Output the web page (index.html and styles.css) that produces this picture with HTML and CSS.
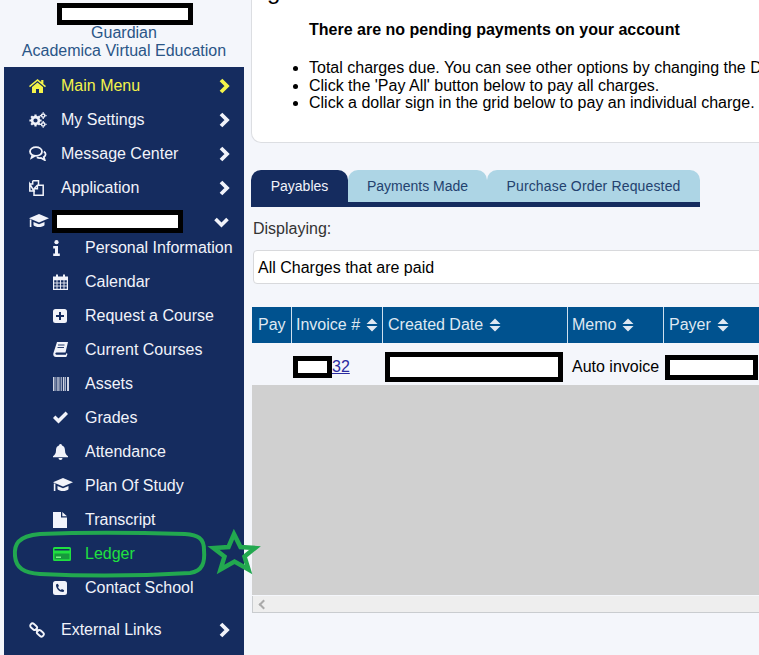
FILE: index.html
```html
<!DOCTYPE html>
<html lang="en">
<head>
  <meta charset="UTF-8" />
  <title>Ledger</title>
  <link rel="stylesheet" href="styles.css">
</head>
<body>
  <svg width="0" height="0" class="icon-defs">
    <symbol id="i-chev" viewBox="0 0 12 16"><path d="M3 2l6 6-6 6" fill="none" stroke="currentColor" stroke-width="3.800"/></symbol>
    <symbol id="i-chev-down" viewBox="0 0 16 12"><path d="M2 3l6 6 6-6" fill="none" stroke="currentColor" stroke-width="3.600"/></symbol>
    <symbol id="i-home" viewBox="0 0 17 14"><path d="M8.500 0L0 7l1 1.200L8.500 2.100 16 8.200 17 7l-2.600-2.100V1h-2.200v2.100z"/><path d="M8.500 3.400l5.500 4.500V14H10v-4H7v4H3V7.900z"/></symbol>
    <symbol id="i-cogs" viewBox="0 0 18 16"><circle cx="6.500" cy="8.500" r="3.400" fill="none" stroke="currentColor" stroke-width="2.600"/><path d="M6.500 2.400v2M6.500 12.600v2M.4 8.500h2M10.600 8.500h2M2.200 4.200l1.400 1.400M9.400 11.400l1.400 1.400M10.800 4.200L9.400 5.600M3.600 11.400l-1.400 1.400" stroke="currentColor" stroke-width="2.200"/><circle cx="14.200" cy="3.600" r="1.700" fill="none" stroke="currentColor" stroke-width="1.500"/><circle cx="14.200" cy="12.400" r="1.700" fill="none" stroke="currentColor" stroke-width="1.500"/><path d="M14.200.2v1.200M14.200 5.800V7M10.800 3.600H12M16.400 3.600h1.200M14.200 9v1.200M14.200 14.600v1.200M10.800 12.400H12M16.400 12.400h1.200" stroke="currentColor" stroke-width="1.300"/></symbol>
    <symbol id="i-comments" viewBox="0 0 18 15"><ellipse cx="7" cy="5.500" rx="6" ry="4.400" fill="none" stroke="currentColor" stroke-width="1.800"/><path d="M3.300 9l-1 3 3.500-2" fill="none" stroke="currentColor" stroke-width="1.500"/><path d="M14.800 5.500c2.400 1.500 2.400 4.200 0 5.500l.9 3-3.700-2c-1.500.2-3 0-4.100-.8" fill="none" stroke="currentColor" stroke-width="1.800"/></symbol>
    <symbol id="i-clone" viewBox="0 0 15 16"><path d="M3.700.8H9.500V5M5 11H.8V4z" fill="none" stroke="currentColor" stroke-width="1.500"/><path d="M3.700.8V4H.8" fill="none" stroke="currentColor" stroke-width="1.500"/><path d="M8.400 5.300h5.800v10H5V8.800z" fill="none" stroke="currentColor" stroke-width="1.500"/><path d="M8.400 5.300v3.500H5" fill="none" stroke="currentColor" stroke-width="1.500"/></symbol>
    <symbol id="i-grad" viewBox="0 0 20 15"><path d="M10 0L0 4.300l10 4.300 10-4.300z"/><path d="M4.500 8v3.200c2 2.400 9 2.400 11 0V8L10 10.300z"/><path d="M1.600 5.500v7.500" stroke="currentColor" stroke-width="1.600"/></symbol>
    <symbol id="i-info" viewBox="0 0 7 16"><circle cx="3.500" cy="2.200" r="2.100"/><path d="M.2 6h4.800v7.500h1.800V16H.2v-2.500H2V8.500H.2z"/></symbol>
    <symbol id="i-cal" viewBox="0 0 15 16"><path d="M.6 3h13.800v12.400H.6z" fill="none" stroke="currentColor" stroke-width="1.200"/><path d="M.6 3h13.800v3.200H.6zM3 .5h2v3.500H3zM10 .5h2v3.500h-2z"/><path d="M.6 9h13.800M.6 12h13.800M4 6v9M7.500 6v9M11 6v9" stroke="currentColor" stroke-width=".9"/></symbol>
    <symbol id="i-plus" viewBox="0 0 14 14"><path fill-rule="evenodd" d="M2.500 0h9A2.500 2.500 0 0 1 14 2.500v9a2.500 2.500 0 0 1-2.500 2.500h-9A2.500 2.500 0 0 1 0 11.500v-9A2.500 2.500 0 0 1 2.500 0zM6 3v3H3v2h3v3h2V8h3V6H8V3z"/></symbol>
    <symbol id="i-book" viewBox="0 0 15 15"><path d="M4 0H15L12.500 10.500H3.500c-1 0-1.400.8-1 1.600.2.400.6.600 1 .6h9.300l.7-1.700L14.500 12 13.300 15H3C1 15 0 13.500.3 11.500z"/><path d="M5 3h6.500M4.500 5.500H11" stroke="#152c5f" stroke-width=".9"/></symbol>
    <symbol id="i-barcode" viewBox="0 0 16 14"><path d="M0 0h1.500v14H0zM2.500 0h.8v14h-.8zM4.300 0h1.400v14H4.300zM6.500 0h.8v14h-.8zM8.300 0h.8v14h-.8zM10 0h1.400v14H10zM12.200 0h.8v14h-.8zM14 0h2v14h-2z" opacity=".85"/></symbol>
    <symbol id="i-check" viewBox="0 0 15 13"><path d="M0 7l2.400-2.400L5.500 7.500 12.600 .5 15 3 5.500 12.500z"/></symbol>
    <symbol id="i-bell" viewBox="0 0 15 16"><circle cx="7.500" cy="1.300" r="1.300"/><path d="M7.500 1.300c3.200 0 4.500 2.400 4.500 5.200 0 3 1.300 4.600 3 5.800V13.300H0v-1c1.700-1.200 3-2.800 3-5.800 0-2.800 1.300-5.200 4.500-5.200z"/><path d="M5.500 14h4a2 2 0 0 1-4 0z"/></symbol>
    <symbol id="i-file" viewBox="0 0 14 16"><path d="M0 0h8v5.500h6V16H0zM9.300 0L14 4.300H9.300z"/></symbol>
    <symbol id="i-card" viewBox="0 0 18 14"><path fill-rule="evenodd" d="M1.500 0h15A1.500 1.500 0 0 1 18 1.500v11a1.500 1.500 0 0 1-1.500 1.500h-15A1.500 1.500 0 0 1 0 12.500v-11A1.500 1.500 0 0 1 1.500 0zM1.500 2v1.500h15V2z"/><path d="M1.500 6.500h15v5.800h-15z" fill="#169a3c"/><path d="M3 9.500h5V11H3z" fill="#7ff08a"/></symbol>
    <symbol id="i-phone" viewBox="0 0 14 14"><path fill-rule="evenodd" d="M2.500 0h9A2.500 2.500 0 0 1 14 2.500v9a2.500 2.500 0 0 1-2.500 2.500h-9A2.500 2.500 0 0 1 0 11.500v-9A2.500 2.500 0 0 1 2.500 0zM4.800 2.800L3 3.500c-.3 4 3.500 7.800 7.500 7.500l.7-1.800-2.300-1.200-1 1C6.500 8.500 5.500 7.500 5 6.100l1-1z"/></symbol>
    <symbol id="i-link" viewBox="0 0 16 16"><rect x="0.900" y="2.400" width="7.500" height="4.600" rx="2.300" transform="rotate(40 4.600 4.700)" fill="none" stroke="currentColor" stroke-width="1.900"/><rect x="7.600" y="9" width="7.500" height="4.600" rx="2.300" transform="rotate(40 11.400 11.300)" fill="none" stroke="currentColor" stroke-width="1.900"/><path d="M6.500 6.500l3 3" stroke="currentColor" stroke-width="1.900"/></symbol>
    <symbol id="i-sort" viewBox="0 0 12 14"><path d="M6 .5l5.500 5.500H.5zM6 13.500L.5 8h11z"/></symbol>
  </svg>

  <div class="layout">
    <aside class="sidebar">
      <div class="school">
        <span class="redact school-redact"></span>
        <div class="school-role">Guardian</div>
        <div class="school-name">Academica Virtual Education</div>
      </div>
      <nav class="menu">
        <a class="menu-item active"><svg class="ico w17 h14"><use href="#i-home"/></svg><span>Main Menu</span><svg class="chev"><use href="#i-chev"/></svg></a>
        <a class="menu-item"><svg class="ico w18 h16"><use href="#i-cogs"/></svg><span>My Settings</span><svg class="chev"><use href="#i-chev"/></svg></a>
        <a class="menu-item"><svg class="ico w18 h15"><use href="#i-comments"/></svg><span>Message Center</span><svg class="chev"><use href="#i-chev"/></svg></a>
        <a class="menu-item"><svg class="ico w15 h16"><use href="#i-clone"/></svg><span>Application</span><svg class="chev"><use href="#i-chev"/></svg></a>
        <a class="menu-item student"><svg class="ico w20 h15"><use href="#i-grad"/></svg><span class="redact student-redact"></span><svg class="chev-down"><use href="#i-chev-down"/></svg></a>
        <div class="submenu">
          <a class="sub-item"><svg class="ico w7 h16"><use href="#i-info"/></svg>Personal Information</a>
          <a class="sub-item"><svg class="ico w15 h16"><use href="#i-cal"/></svg>Calendar</a>
          <a class="sub-item"><svg class="ico w14 h14"><use href="#i-plus"/></svg>Request a Course</a>
          <a class="sub-item"><svg class="ico w15 h15"><use href="#i-book"/></svg>Current Courses</a>
          <a class="sub-item"><svg class="ico w16 h14"><use href="#i-barcode"/></svg>Assets</a>
          <a class="sub-item"><svg class="ico w15 h13"><use href="#i-check"/></svg>Grades</a>
          <a class="sub-item"><svg class="ico w15 h16"><use href="#i-bell"/></svg>Attendance</a>
          <a class="sub-item"><svg class="ico w20 h15"><use href="#i-grad"/></svg>Plan Of Study</a>
          <a class="sub-item"><svg class="ico w14 h16"><use href="#i-file"/></svg>Transcript</a>
          <a class="sub-item current"><svg class="ico w18 h14"><use href="#i-card"/></svg>Ledger</a>
          <a class="sub-item"><svg class="ico w14 h14"><use href="#i-phone"/></svg>Contact School</a>
        </div>
        <a class="menu-item"><svg class="ico w16 h16"><use href="#i-link"/></svg><span>External Links</span><svg class="chev"><use href="#i-chev"/></svg></a>
      </nav>
    </aside>

    <main class="content">
      <section class="notice">
        <div class="notice-title">g</div>
        <p class="notice-head">There are no pending payments on your account</p>
        <ul class="notice-list">
          <li>Total charges due. You can see other options by changing the Displaying dropdown.</li>
          <li>Click the 'Pay All' button below to pay all charges.</li>
          <li>Click a dollar sign in the grid below to pay an individual charge.</li>
        </ul>
      </section>

      <div class="tabs">
        <a class="tab selected">Payables</a>
        <a class="tab tab-made">Payments Made</a>
        <a class="tab tab-po">Purchase Order Requested</a>
      </div>

      <div class="displaying">Displaying:</div>
      <div class="select">All Charges that are paid</div>

      <div class="grid">
        <div class="grid-row grid-head">
          <div class="cell c-pay">Pay</div>
          <div class="cell c-inv">Invoice # <svg class="sort"><use href="#i-sort"/></svg></div>
          <div class="cell c-date">Created Date <svg class="sort"><use href="#i-sort"/></svg></div>
          <div class="cell c-memo">Memo <svg class="sort"><use href="#i-sort"/></svg></div>
          <div class="cell c-payer">Payer <svg class="sort"><use href="#i-sort"/></svg></div>
        </div>
        <div class="grid-row grid-data">
          <div class="cell c-pay"></div>
          <div class="cell c-inv"><span class="redact inv-redact"></span><a class="inv-link" href="#">32</a></div>
          <div class="cell c-date"><span class="redact date-redact"></span></div>
          <div class="cell c-memo">Auto invoice</div>
          <div class="cell c-payer"><span class="redact payer-redact"></span></div>
        </div>
        <div class="grid-empty"></div>
        <div class="grid-scroll"><span class="scroll-left"></span></div>
      </div>
    </main>
  </div>

  <!-- hand-drawn marks on top of the screenshot -->
  <svg class="marks" width="270" height="60" viewBox="0 527 270 60">
    <path d="M40 534C90 532 150 533 185 534c13 1 19 4 19 16 1 12-1 21-14 23-50 3-110 3-150 1-16-1-24-6-25-18-1-11 2-20 25-22z" fill="none" stroke="#22a84f" stroke-width="4"/>
    <path d="M234 534L240.500 547l14.500 1-10.500 8.500 4 13-14-8-14 8 4-13-11-8.500 15-1z" fill="none" stroke="#22a84f" stroke-width="4.500"/>
  </svg>
</body>
</html>
```

FILE: styles.css
```css
html, body {
  margin: 0;
  padding: 0;
  height: 655px;
  overflow: hidden;
}
body {
  background: #f4f6fb;
  font-family: 'Liberation Sans', Arial, sans-serif;
  font-size: 16px;
  color: #000;
  position: relative;
}
.icon-defs {
  position: absolute;
}
.redact {
  display: block;
  box-sizing: border-box;
  background: #fff;
  border: 5px solid #000;
}
.layout {
  display: flex;
  align-items: flex-start;
  padding-left: 4px;
}

/* sidebar */
.sidebar {
  width: 240px;
  flex: none;
}
.school {
  height: 67px;
  text-align: center;
  color: #2a5587;
  line-height: 18px;
  box-sizing: border-box;
  padding-top: 3px;
}
.school-redact {
  width: 136px;
  height: 22px;
  margin: 0 0 0 53px;
}
.school-role {
  margin-top: -1px;
}
.menu {
  background: #152c5f;
  height: 588px;
  padding-top: 1px;
  box-sizing: border-box;
}
.menu-item {
  display: grid;
  grid-template-columns: 32px 1fr auto;
  align-items: center;
  height: 34px;
  padding: 1px 0 0 25px;
  box-sizing: border-box;
  color: #f1f3fa;
}
.menu-item.active {
  color: #f4f34a;
}
.ico {
  fill: currentColor;
  display: block;
}
.w7 { width: 7px; }
.w14 { width: 14px; }
.w15 { width: 15px; }
.w16 { width: 16px; }
.w17 { width: 17px; }
.w18 { width: 18px; }
.w20 { width: 20px; }
.h13 { height: 13px; }
.h14 { height: 14px; }
.h15 { height: 15px; }
.h16 { height: 16px; }
.chev {
  width: 12px;
  height: 16px;
  margin-right: 14px;
  fill: none;
}
.chev-down {
  width: 17px;
  height: 12px;
  margin-right: 14px;
  fill: none;
}
.student-redact {
  width: 131px;
  height: 23px;
  margin-left: -9px;
}
.submenu {
  margin: -8px 0 8px;
}
.sub-item {
  display: grid;
  grid-template-columns: 32px 1fr;
  align-items: center;
  height: 34px;
  padding: 1px 0 0 49px;
  box-sizing: border-box;
  color: #f1f3fa;
}
.sub-item.current {
  color: #20e040;
}

/* main column */
.content {
  flex: none;
  width: 640px;
  margin-left: 7px;
}
.notice {
  height: 143px;
  box-sizing: border-box;
  background: #fff;
  border: 1px solid #dcdee2;
  border-top: 0;
  border-radius: 0 0 10px 10px;
  padding-left: 15px;
  overflow: hidden;
}
.notice-title {
  font-size: 24px;
  line-height: 24px;
  margin-top: -21px;
}
.notice-head {
  font-weight: bold;
  margin: 18px 0 0 42px;
  line-height: 18px;
}
.notice-list {
  margin: 20px 0 0;
  padding-left: 42px;
  line-height: 17.500px;
  white-space: nowrap;
}
.tabs {
  display: flex;
  width: 449px;
  margin-top: 27px;
  border-bottom: 5px solid #152c5f;
  font-size: 14px;
}
.tab {
  display: flex;
  align-items: center;
  justify-content: center;
  height: 32px;
  background: #add5e5;
  color: #23426f;
  border-radius: 10px 10px 0 0;
  box-sizing: border-box;
}
.tab.selected {
  width: 97px;
  background: #152c5f;
  color: #f1f3fa;
}
.tab-made {
  width: 139px;
}
.tab-po {
  width: 213px;
  letter-spacing: .15px;
}
.displaying {
  margin: 13px 0 0 2px;
  line-height: 18px;
  color: #333;
}
.select {
  box-sizing: border-box;
  height: 34px;
  margin: 12px 0 0 2px;
  width: 700px;
  background: #fff;
  border: 1px solid #d8d9dc;
  border-radius: 4px;
  padding-left: 4px;
  line-height: 33px;
}

/* grid */
.grid {
  margin: 23px 0 0 1px;
  width: 640px;
}
.grid-row {
  display: flex;
}
.cell {
  box-sizing: border-box;
  display: flex;
  align-items: center;
  flex: none;
  padding-left: 5px;
  white-space: nowrap;
}
.c-pay { width: 40px; padding-left: 6px; }
.c-inv { width: 91px; padding-left: 4px; }
.c-date { width: 185px; }
.c-memo { width: 96px; padding-left: 4px; }
.c-payer { width: 120px; }
.grid-head {
  height: 36px;
  background: #00528f;
  color: #dfe8f2;
}
.grid-head .cell {
  border-right: 1px solid #cfe0ee;
}
.grid-head .c-payer {
  flex: 1;
  border-right: 0;
}
.sort {
  width: 12px;
  height: 14px;
  fill: currentColor;
  margin-left: 6px;
}
.grid-data {
  height: 42px;
  padding-top: 6px;
  box-sizing: border-box;
  background: #f4f6fb;
}
.inv-redact {
  width: 39px;
  height: 22px;
  margin-left: -3px;
}
.inv-link {
  color: #2a2a9f;
}
.date-redact {
  width: 178px;
  height: 30px;
  margin-left: -3px;
}
.payer-redact {
  width: 93px;
  height: 25px;
  margin-left: -4px;
}
.grid-empty {
  height: 210px;
  background: #d0d0d0;
}
.grid-scroll {
  height: 16px;
  margin-top: 1px;
  background: #eeeeee;
  border-bottom: 1px solid #c9cccf;
  border-left: 1px solid #c9cccf;
  position: relative;
}
.scroll-left {
  position: absolute;
  left: 7px;
  top: 5px;
  width: 5px;
  height: 5px;
  border-left: 2px solid #aaa;
  border-bottom: 2px solid #aaa;
  transform: rotate(45deg);
}

/* green annotation drawn over the page */
.marks {
  position: absolute;
  left: 0;
  top: 527px;
}
```
